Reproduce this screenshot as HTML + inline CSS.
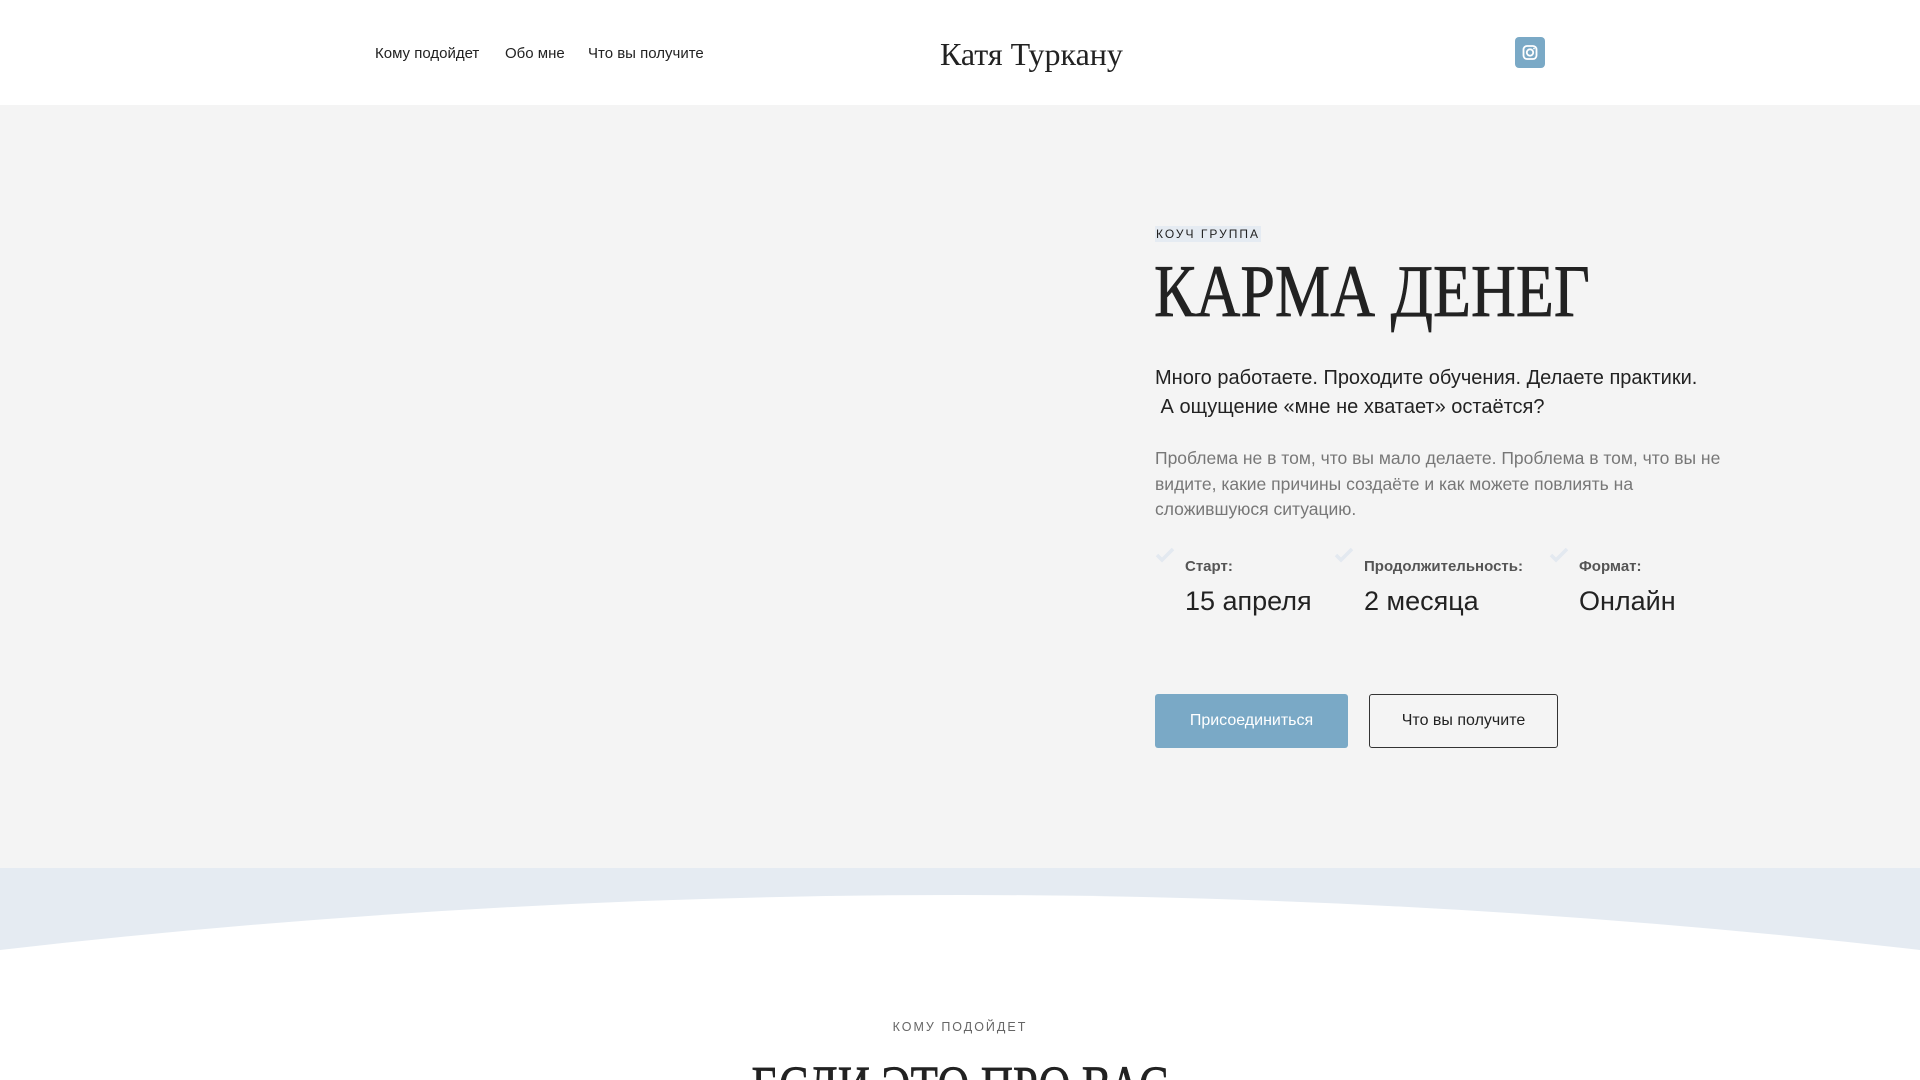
<!DOCTYPE html>
<html><head><meta charset="utf-8"><style>
*{margin:0;padding:0;box-sizing:border-box}
body{width:1920px;height:1080px;overflow:hidden;background:#fff;font-family:"Liberation Sans","DejaVu Sans",sans-serif;position:relative;color:#222}
.a{position:absolute;white-space:nowrap}
.nav{font-size:15px;color:#222;top:45px}
.serif{font-family:"Liberation Serif","DejaVu Serif",serif}
</style></head><body>
<div class="a" style="left:0;top:0;width:1920px;height:105px;background:#fff"></div>
<div class="a nav" style="left:375px">Кому подойдет</div>
<div class="a nav" style="left:505px">Обо мне</div>
<div class="a nav" style="left:588px">Что вы получите</div>
<div class="a serif" style="left:940px;top:36px;font-size:32px;color:#222">Катя Туркану</div>
<div class="a" style="left:1515px;top:37px;width:30px;height:31px;background:#7aa9c6;border-radius:4px">
<svg width="30" height="31" viewBox="0 0 30 31"><rect x="8.5" y="9" width="13" height="13" rx="3.5" fill="none" stroke="#fff" stroke-width="1.8"/><circle cx="15" cy="15.5" r="3.2" fill="none" stroke="#fff" stroke-width="1.8"/><circle cx="19" cy="11.5" r="0.9" fill="#fff"/></svg></div>

<div class="a" style="left:0;top:105px;width:1920px;height:763px;background:#f4f4f4"></div>
<svg class="a" style="left:0;top:868px" width="1920" height="100"><rect width="1920" height="100" fill="#e5ebf2"/><path d="M0 82 Q960 -28 1920 82 L1920 100 L0 100 Z" fill="#fff"/></svg>

<div class="a" style="left:1155px;top:226px;font-size:12px;letter-spacing:2px;background:#e5ebf2;padding:1px 1px;color:#222">КОУЧ ГРУППА</div>
<div class="a serif" style="left:1154px;top:250px;font-size:74px;color:#222;transform:scaleX(0.84);transform-origin:0 0;-webkit-text-stroke:0.7px #222">КАРМА ДЕНЕГ</div>
<div class="a" style="left:1155px;top:364px;font-size:20px;line-height:29px;color:#222">Много работаете. Проходите обучения. Делаете практики.<br>&nbsp;А ощущение «мне не хватает» остаётся?</div>
<div class="a" style="left:1155px;top:446px;font-size:17.5px;line-height:25.7px;color:#777;white-space:normal;width:580px">Проблема не в том, что вы мало делаете. Проблема в том, что вы не видите, какие причины создаёте и как можете повлиять на сложившуюся ситуацию.</div>

<svg class="a" style="left:1155px;top:546px" width="20" height="18"><path d="M2 9l5 5L18 3" fill="none" stroke="#e3e9f0" stroke-width="3.5"/></svg>
<svg class="a" style="left:1334px;top:546px" width="20" height="18"><path d="M2 9l5 5L18 3" fill="none" stroke="#e3e9f0" stroke-width="3.5"/></svg>
<svg class="a" style="left:1549px;top:546px" width="20" height="18"><path d="M2 9l5 5L18 3" fill="none" stroke="#e3e9f0" stroke-width="3.5"/></svg>
<div class="a" style="left:1185px;top:558px;font-size:15px;color:#555;font-weight:bold">Старт:</div>
<div class="a" style="left:1364px;top:558px;font-size:15px;color:#555;font-weight:bold">Продолжительность:</div>
<div class="a" style="left:1579px;top:558px;font-size:15px;color:#555;font-weight:bold">Формат:</div>
<div class="a" style="left:1185px;top:586px;font-size:27px;color:#222">15 апреля</div>
<div class="a" style="left:1364px;top:586px;font-size:27px;color:#222">2 месяца</div>
<div class="a" style="left:1579px;top:586px;font-size:27px;color:#222">Онлайн</div>

<div class="a" style="left:1155px;top:694px;width:193px;height:54px;background:#7aa9c6;border-radius:3px;color:#fff;font-size:16px;line-height:54px;text-align:center">Присоединиться</div>
<div class="a" style="left:1369px;top:694px;width:189px;height:54px;border:1.5px solid #333;border-radius:3px;color:#222;font-size:16px;line-height:51px;text-align:center">Что вы получите</div>

<div class="a" style="left:0;width:1920px;text-align:center;top:1020px;font-size:12.5px;letter-spacing:2px;color:#666">КОМУ ПОДОЙДЕТ</div>
<div class="a" style="left:0;top:1040px;width:1920px;height:40px;overflow:hidden">
<div class="serif" style="position:absolute;left:0;width:1920px;text-align:center;top:13px;font-size:58px;color:#222;transform:scaleX(0.77);-webkit-text-stroke:0.7px #222">ЕСЛИ ЭТО ПРО ВАС</div></div>
</body></html>
